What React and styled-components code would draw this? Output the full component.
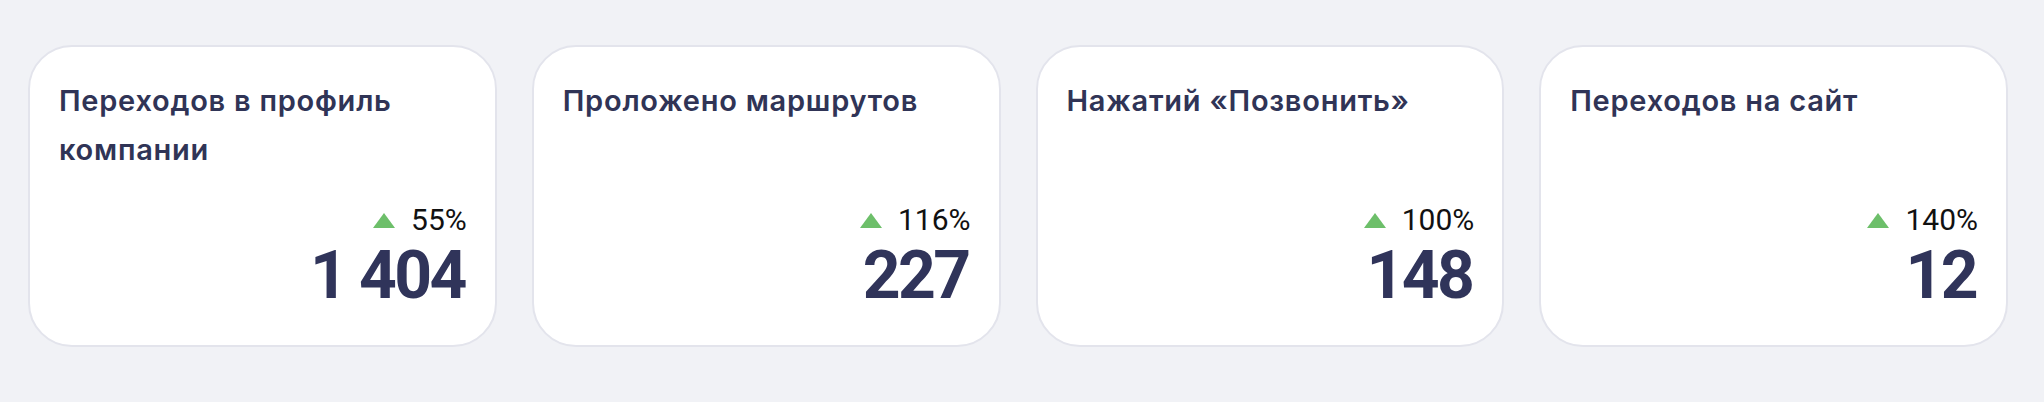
import React from "react";
import styled, { createGlobalStyle } from "styled-components";

const Global = createGlobalStyle`
  html, body {
    margin: 0;
    padding: 0;
    height: 100%;
    background: #f1f2f6;
  }
  #root { height: 100%; }
`;

const Page = styled.div`
  display: grid;
  grid-template-columns: repeat(4, 1fr);
  gap: 35px;
  padding: 45px 36px 0 28px;
  box-sizing: border-box;
`;

const Card = styled.div`
  height: 302px;
  box-sizing: border-box;
  background: #ffffff;
  border: 2px solid #e3e4ec;
  border-radius: 44px;
  padding: 29px 30px 36px 29px;
  display: flex;
  flex-direction: column;
`;

const Title = styled.div`
  font-family: Inter, "Noto Sans", sans-serif;
  font-weight: 600;
  font-size: 29px;
  line-height: 49px;
  color: #303456;
  letter-spacing: 0.75px;
`;

const Stats = styled.div`
  margin-top: auto;
  display: flex;
  flex-direction: column;
  align-items: flex-end;
`;

const Delta = styled.div`
  display: flex;
  align-items: center;
  gap: 16px;
  font-family: Roboto, "Noto Sans", sans-serif;
  font-size: 30px;
  line-height: 34px;
  color: #111111;
  margin-bottom: 6px;
  margin-right: -2px;
`;

const Arrow = styled.span`
  width: 0;
  height: 0;
  border-left: 11.5px solid transparent;
  border-right: 11.5px solid transparent;
  border-bottom: 15px solid #6dbf6a;
`;

const Value = styled.div`
  font-family: Roboto, "Noto Sans", sans-serif;
  font-weight: 700;
  font-size: 66px;
  line-height: 1;
  letter-spacing: -2.6px;
  color: #30345a;
`;

const data = [
  { title: "Переходов в профиль компании", delta: "55%", value: "1 404" },
  { title: "Проложено маршрутов", delta: "116%", value: "227" },
  { title: "Нажатий «Позвонить»", delta: "100%", value: "148" },
  { title: "Переходов на сайт", delta: "140%", value: "12" },
];

export default function App() {
  return (
    <>
      <Global />
      <Page>
        {data.map((d) => (
          <Card key={d.title}>
            <Title>{d.title}</Title>
            <Stats>
              <Delta>
                <Arrow />
                {d.delta}
              </Delta>
              <Value>{d.value}</Value>
            </Stats>
          </Card>
        ))}
      </Page>
    </>
  );
}
